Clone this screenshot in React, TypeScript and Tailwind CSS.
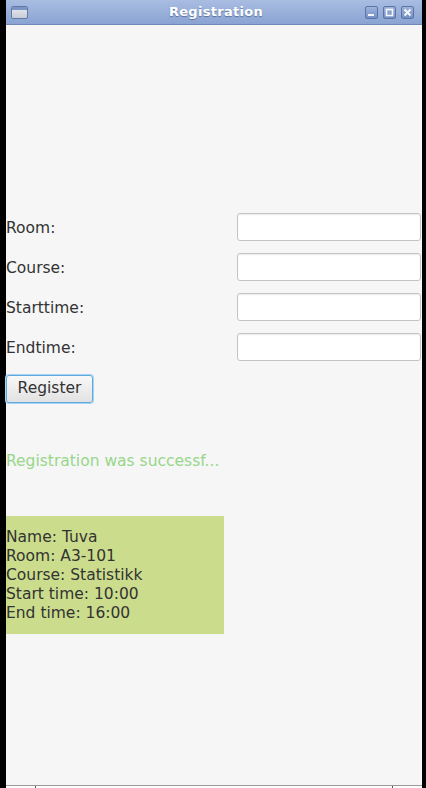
import React from 'react';

const font = { fontFamily: '"DejaVu Sans", Verdana, sans-serif' };

const fields = ['Room:', 'Course:', 'Starttime:', 'Endtime:'];

const WinButton = ({ kind }: { kind: 'min' | 'max' | 'close' }) => (
  <div className="w-[13px] h-[13px] rounded-[2px] border border-[#5a74a8] bg-gradient-to-b from-[#9db3dc] to-[#7490c4] flex items-center justify-center">
    <svg width="9" height="9" viewBox="0 0 9 9">
      {kind === 'min' && <rect x="1" y="6" width="6" height="2" fill="#f4f6fb" />}
      {kind === 'max' && <rect x="1.5" y="1.5" width="6" height="6" fill="none" stroke="#f4f6fb" strokeWidth="1.6" />}
      {kind === 'close' && (
        <path d="M1.5 1.5 L7.5 7.5 M7.5 1.5 L1.5 7.5" stroke="#f4f6fb" strokeWidth="2" />
      )}
    </svg>
  </div>
);

export default function App() {
  return (
    <div className="w-[426px] h-[788px] bg-black flex flex-col overflow-hidden" style={font}>
      {/* title bar */}
      <div className="h-[25px] ml-[6px] mr-[4px] bg-gradient-to-b from-[#a9bde2] to-[#8aa3d2] border-b border-[#7088b8] flex items-center justify-between px-[5px] relative">
        <div className="w-[17px] h-[13px] rounded-[2px] border border-[#6078a8] bg-gradient-to-b from-[#e8eaf0] to-[#c8ccd6] flex flex-col overflow-hidden">
          <div className="h-[3px] bg-[#7c94c4]" />
        </div>
        <div className="absolute inset-x-0 top-0 h-[24px] flex items-center justify-center pl-[4px] text-white font-bold text-[13px] [text-shadow:0_1px_1px_#5a6f99] tracking-[0.3px]">
          Registration
        </div>
        <div className="flex gap-[5px] mr-[3px] relative">
          <WinButton kind="min" />
          <WinButton kind="max" />
          <WinButton kind="close" />
        </div>
      </div>

      {/* content */}
      <div className="flex-1 ml-[6px] mr-[4px] bg-[#f6f6f6] flex flex-col text-[15.5px] text-[#333333]">
        <div className="h-[188px]" />
        <div className="flex flex-col gap-[12px]">
          {fields.map((f) => (
            <div key={f} className="flex items-center h-[28px]">
              <span className="w-[231px] leading-none pt-[3px]">{f}</span>
              <div className="flex-1 h-[28px] mr-[1px] rounded-[3px] border border-[#c4c4c4] bg-white shadow-[inset_0_1px_1px_rgba(0,0,0,0.08)]" />
            </div>
          ))}
        </div>
        <button className="mt-[14px] w-[87px] h-[28px] rounded-[3px] border border-[#5ea9dd] bg-gradient-to-b from-[#f8f8f8] to-[#e2e2e2] text-[15.5px] text-[#333333] shadow-[0_0_0_1px_#a8d2f0] flex items-center justify-center" style={font}>
          Register
        </button>
        <div className="mt-[51px] text-[#98d68a] leading-none whitespace-nowrap">Registration was successf...</div>
        <div className="mt-[46px] w-[218px] h-[118px] bg-[#cbdd8c] pt-[12px] leading-[19px] text-[#333333]">
          <div>Name: Tuva</div>
          <div>Room: A3-101</div>
          <div>Course: Statistikk</div>
          <div>Start time: 10:00</div>
          <div>End time: 16:00</div>
        </div>
        <div className="flex-1" />
        <div className="h-[3px] border-t border-[#9a9a9a] bg-white flex">
          <div className="w-[30px] border-r border-[#555555]" />
          <div className="flex-1" />
          <div className="w-[30px] border-l border-[#555555]" />
        </div>
      </div>
    </div>
  );
}
